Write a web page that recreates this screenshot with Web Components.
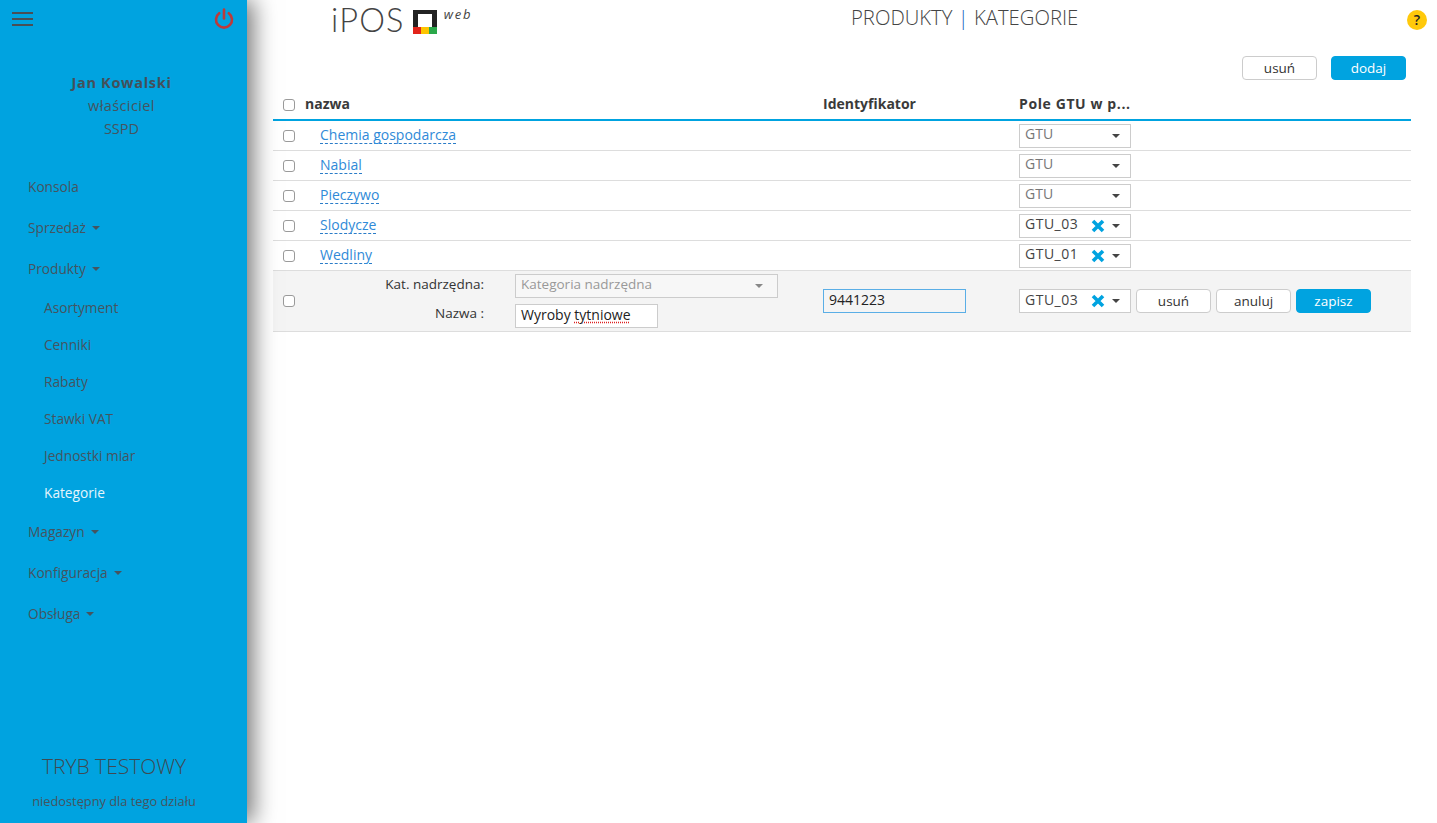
<!DOCTYPE html>
<html lang="pl">
<head>
<meta charset="utf-8">
<title>iPOS web</title>
<style>
  html, body { margin: 0; height: 100%; }
  body { font-family: "Open Sans", "Liberation Sans", sans-serif; color: #444; background: #fff; overflow: hidden; }
</style>
</head>
<body>
<app-shell>
  <app-sidebar slot="side">
    <side-link>Konsola</side-link>
    <side-link caret>Sprzedaż</side-link>
    <side-link caret>Produkty</side-link>
    <side-group>
      <side-sublink>Asortyment</side-sublink>
      <side-sublink>Cenniki</side-sublink>
      <side-sublink>Rabaty</side-sublink>
      <side-sublink>Stawki VAT</side-sublink>
      <side-sublink>Jednostki miar</side-sublink>
      <side-sublink active>Kategorie</side-sublink>
    </side-group>
    <side-link caret>Magazyn</side-link>
    <side-link caret>Konfiguracja</side-link>
    <side-link caret>Obsługa</side-link>
  </app-sidebar>
  <top-bar></top-bar>
  <tool-bar>
    <ui-button>usuń</ui-button>
    <ui-button primary>dodaj</ui-button>
  </tool-bar>
  <cat-table>
    <cat-row name="Chemia gospodarcza"><gtu-select placeholder></gtu-select></cat-row>
    <cat-row name="Nabial"><gtu-select placeholder></gtu-select></cat-row>
    <cat-row name="Pieczywo"><gtu-select placeholder></gtu-select></cat-row>
    <cat-row name="Slodycze"><gtu-select value="GTU_03"></gtu-select></cat-row>
    <cat-row name="Wedliny"><gtu-select value="GTU_01"></gtu-select></cat-row>
    <cat-edit-row></cat-edit-row>
  </cat-table>
</app-shell>

<script>
const font = '"Open Sans", "Liberation Sans", sans-serif';

function comp(tag, html) {
  customElements.define(tag, class extends HTMLElement {
    connectedCallback() {
      if (this.shadowRoot) return;
      this.attachShadow({ mode: 'open' });
      this.shadowRoot.innerHTML = typeof html === 'function' ? html(this) : html;
    }
  });
}

const caret = '<svg class="caret" width="8" height="4" viewBox="0 0 8 4"><path d="M0 0h8L4 4z" fill="currentColor"/></svg>';

comp('app-shell', `
  <style>
    :host { display: flex; height: 100vh; }
    .main { flex: 1; min-width: 0; display: flex; flex-direction: column; padding: 0 26px; }
  </style>
  <slot name="side"></slot>
  <div class="main"><slot></slot></div>
`);

comp('app-sidebar', `
  <style>
    :host { display: flex; flex-direction: column; flex: none; width: 247px; height: 100%; background: #00a3e0;
      color: #45545f; box-shadow: 6px 0 22px rgba(0,0,0,.55); position: relative; z-index: 2; font-size: 13.7px; }
    .top { display: flex; justify-content: space-between; align-items: center; height: 38px; padding: 0 13px 0 12px; }
    .user { text-align: center; padding: 33px 0 0; width: 243px; font-size: 14.5px; line-height: 23px; height: 95px; }
    .user b { display: block; font-weight: 700; color: #44505a; letter-spacing: .7px; }
    .user span { letter-spacing: .4px; }
    nav { flex: 1; }
    .test { text-align: center; width: 228px; height: 70px; }
    .test .t { font-size: 21px; font-weight: 300; line-height: 26px; color: #3f4a52; }
    .test .d { font-size: 12.8px; line-height: 17px; margin-top: 14px; }
  </style>
  <div class="top">
    <svg width="21" height="14" viewBox="0 0 21 14"><path d="M0 1h21M0 7h21M0 13h21" stroke="#4a4f55" stroke-width="2"/></svg>
    <svg width="20" height="22" viewBox="0 0 20 22"><path d="M10 1.5v9" stroke="#bd3a3a" stroke-width="2.6" stroke-linecap="round" fill="none"/><path d="M5.2 5.2a8 8 0 1 0 9.6 0" stroke="#bd3a3a" stroke-width="2.6" stroke-linecap="round" fill="none"/></svg>
  </div>
  <div class="user"><b>Jan Kowalski</b><span>właściciel</span><br>SSPD</div>
  <nav><slot></slot></nav>
  <div class="test"><div class="t">TRYB TESTOWY</div><div class="d">niedostępny dla tego działu</div></div>
`);

comp('side-link', el => `
  <style>
    :host { display: flex; align-items: center; gap: 6px; height: 41px; padding-left: 28px; }
    .caret { margin-top: 1px; }
  </style>
  <slot></slot>${el.hasAttribute('caret') ? caret : ''}
`);

comp('side-group', `
  <style>:host { display: block; }</style>
  <slot></slot>
`);

comp('side-sublink', el => `
  <style>
    :host { display: flex; align-items: center; height: 37px; padding-left: 44px; ${el.hasAttribute('active') ? 'color: #e6f5fc;' : ''} }
  </style>
  <slot></slot>
`);

comp('top-bar', `
  <style>
    :host { display: grid; grid-template-columns: 578px auto 1fr; align-items: center; height: 38px; margin-right: -26px; }
    .logo { display: flex; align-items: center; padding-left: 58px; color: #444; }
    .ipos { font: 300 32.5px/38px Lato, "Open Sans", sans-serif; letter-spacing: 1.2px; padding-top: 1px; }
    .web { font-size: 13px; font-style: italic; letter-spacing: 1.8px; margin: -12px 0 0 7px; }
    svg.mark { margin: 4px 0 0 8px; }
    h1 { margin: -6px 0 0; font-size: 20.3px; font-weight: 300; color: #444; }
    h1 i { font-style: normal; color: #1565c0; }
    .help { justify-self: end; width: 20px; height: 20px; margin-right: 10px; border-radius: 50%; background: #ffc90b; color: #222;
      font-size: 14px; font-weight: 600; text-align: center; line-height: 20px; }
  </style>
  <div class="logo">
    <span class="ipos">iPOS</span>
    <svg class="mark" width="24" height="24" viewBox="0 0 24 24">
      <path d="M0 0h24v24H0z" fill="#222"/>
      <path d="M0 17h8v7H0z" fill="#e2231a"/><path d="M8 17h8v7H8z" fill="#fdc400"/><path d="M16 17h8v7h-8z" fill="#2aa84a"/>
      <path d="M5 4h14v13H5z" fill="#fff"/>
    </svg>
    <span class="web">web</span>
  </div>
  <h1>PRODUKTY <i>|</i> KATEGORIE</h1>
  <div class="help">?</div>
`);

comp('tool-bar', `
  <style>
    :host { display: flex; justify-content: flex-end; gap: 14px; padding: 18px 5px 0 0; }
  </style>
  <slot></slot>
`);

comp('ui-button', el => `
  <style>
    :host { display: inline-block; flex: none; }
    button { display: block; box-sizing: border-box; width: 75px; height: 24px; padding: 0; border-radius: 4px; font: 13.5px ${font};
      border: 1px solid ${el.hasAttribute('primary') ? '#00a3e0' : '#ccc'};
      background: ${el.hasAttribute('primary') ? '#00a3e0' : '#fff'};
      color: ${el.hasAttribute('primary') ? '#fff' : '#333'}; }
  </style>
  <button><slot></slot></button>
`);

const grid = `display: grid; grid-template-columns: 32px 518px 196px 1fr; align-items: center;`;
const check = `<span class="check"></span>`;
const checkCss = `.check { display: block; box-sizing: border-box; width: 12px; height: 12px; margin-left: 10px; border: 1px solid #9a9a9a; border-radius: 3px; background: #fff; }`;

comp('cat-table', `
  <style>
    :host { display: block; margin-top: 10px; font-size: 14px; color: #3a3a3a; }
    .head { ${grid} height: 29px; border-bottom: 2px solid #00a3e0; font-weight: 700; }
    .head span { margin-top: -2px; }
    .wide { letter-spacing: .6px; }
    ${checkCss}
    .head .check { margin-top: 0; }
  </style>
  <div class="head">${check}<span>nazwa</span><span>Identyfikator</span><span class="wide">Pole GTU w p...</span></div>
  <slot></slot>
`);

comp('cat-row', el => `
  <style>
    :host { ${grid} height: 29px; border-bottom: 1px solid #ddd; font-size: 14px; }
    ${checkCss}
    a { color: #2f8ad8; text-decoration: none; border-bottom: 1px dashed #2a7cc8; margin: -2px 0 0 15px; line-height: 17px; justify-self: start; }
    .gtu { grid-column: 4; }
  </style>
  ${check}<a href="#">${el.getAttribute('name')}</a><span></span><span class="gtu"><slot></slot></span>
`);

comp('gtu-select', el => {
  const ph = el.hasAttribute('placeholder');
  return `
  <style>
    :host { display: block; width: 112px; flex: none; }
    .box { box-sizing: border-box; display: flex; align-items: center; height: 24px; border: 1px solid #ccc; background: #fff; padding: 0 10px 0 5px;
      font-size: 14px; line-height: 18px; color: ${ph ? '#777' : '#444'}; }
    .val { flex: 1; margin-top: -3px; letter-spacing: ${ph ? 0 : '.5px'}; }
    .x { margin-right: 7px; }
    .caret { color: #444; }
  </style>
  <div class="box"><span class="val">${ph ? 'GTU' : el.getAttribute('value')}</span>
  ${ph ? '' : '<svg class="x" width="14" height="14" viewBox="0 0 14 14"><path d="M2 2l10 10M12 2L2 12" stroke="#00a3e0" stroke-width="3.6"/></svg>'}${caret}</div>`;
});

comp('cat-edit-row', `
  <style>
    :host { ${grid} height: 60px; background: #f4f4f4; border-bottom: 1px solid #ddd; font-size: 14px; color: #333; }
    ${checkCss}
    .fields { display: grid; grid-template-columns: 180px 263px; column-gap: 30px; row-gap: 6px; align-items: center; }
    label { text-align: right; margin: -4px 1px 0 0; font-size: 13.5px; }
    label.n { margin-top: -6px; }
    .kat { box-sizing: border-box; height: 24px; border: 1px solid #ccc; background: #f7f7f7; color: #999; padding: 0 14px 0 5px; display: flex; justify-content: space-between; align-items: center; font-size: 13.5px; }
    .kat span { margin-top: -4px; }
    .kat .caret { color: #888; }
    .name { box-sizing: border-box; width: 143px; height: 24px; border: 1px solid #ccc; background: #fff; padding: 0 5px; line-height: 20px; color: #222; white-space: nowrap; }
    .name u { text-decoration: underline dotted #d22; text-underline-offset: 2px; }
    .id { box-sizing: border-box; width: 143px; height: 24px; border: 1px solid #5aaee6; background: #f4f4f4; padding: 0 5px; line-height: 20px; color: #222; }
    .end { display: flex; gap: 5px; align-items: center; }
  </style>
  ${check}
  <div class="fields">
    <label>Kat. nadrzędna:</label>
    <div class="kat"><span>Kategoria nadrzędna</span>${caret}</div>
    <label class="n">Nazwa :</label>
    <div class="name">Wyroby <u>tytniowe</u></div>
  </div>
  <div class="id">9441223</div>
  <div class="end">
    <gtu-select value="GTU_03"></gtu-select>
    <ui-button>usuń</ui-button>
    <ui-button>anuluj</ui-button>
    <ui-button primary>zapisz</ui-button>
  </div>
`);
</script>
</body>
</html>
